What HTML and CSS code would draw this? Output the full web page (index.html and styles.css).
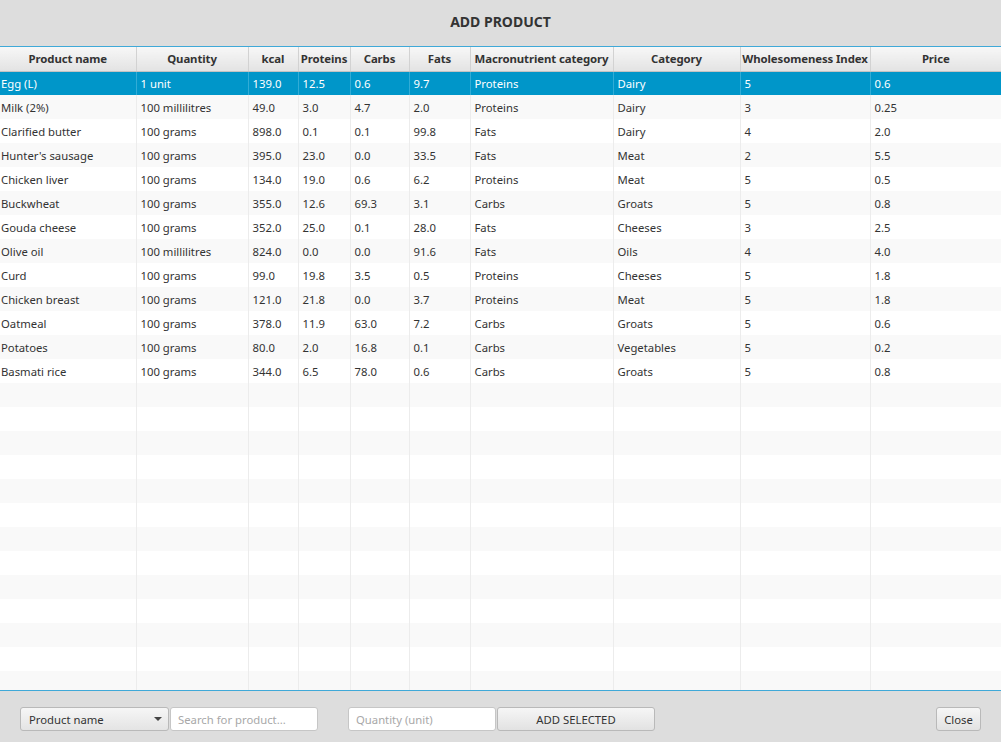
FILE: index.html
```html
<!DOCTYPE html>
<html>
<head>
<meta charset="utf-8">
<link rel="stylesheet" href="styles.css">
</head>
<body>
<div class="window">
  <div class="title">ADD PRODUCT</div>
  <div class="table-wrap">
    <table class="grid">
      <colgroup>
        <col style="width:136px"><col style="width:112px"><col style="width:50px"><col style="width:52px"><col style="width:59px"><col style="width:61px"><col style="width:143px"><col style="width:127px"><col style="width:130px"><col style="width:131px">
      </colgroup>
      <thead>
        <tr><th>Product name</th><th>Quantity</th><th>kcal</th><th>Proteins</th><th>Carbs</th><th>Fats</th><th>Macronutrient category</th><th>Category</th><th>Wholesomeness Index</th><th>Price</th></tr>
      </thead>
      <tbody>
        <tr class="sel"><td>Egg (L)</td><td>1 unit</td><td>139.0</td><td>12.5</td><td>0.6</td><td>9.7</td><td>Proteins</td><td>Dairy</td><td>5</td><td>0.6</td></tr>
        <tr><td>Milk (2%)</td><td>100 millilitres</td><td>49.0</td><td>3.0</td><td>4.7</td><td>2.0</td><td>Proteins</td><td>Dairy</td><td>3</td><td>0.25</td></tr>
        <tr><td>Clarified butter</td><td>100 grams</td><td>898.0</td><td>0.1</td><td>0.1</td><td>99.8</td><td>Fats</td><td>Dairy</td><td>4</td><td>2.0</td></tr>
        <tr><td>Hunter's sausage</td><td>100 grams</td><td>395.0</td><td>23.0</td><td>0.0</td><td>33.5</td><td>Fats</td><td>Meat</td><td>2</td><td>5.5</td></tr>
        <tr><td>Chicken liver</td><td>100 grams</td><td>134.0</td><td>19.0</td><td>0.6</td><td>6.2</td><td>Proteins</td><td>Meat</td><td>5</td><td>0.5</td></tr>
        <tr><td>Buckwheat</td><td>100 grams</td><td>355.0</td><td>12.6</td><td>69.3</td><td>3.1</td><td>Carbs</td><td>Groats</td><td>5</td><td>0.8</td></tr>
        <tr><td>Gouda cheese</td><td>100 grams</td><td>352.0</td><td>25.0</td><td>0.1</td><td>28.0</td><td>Fats</td><td>Cheeses</td><td>3</td><td>2.5</td></tr>
        <tr><td>Olive oil</td><td>100 millilitres</td><td>824.0</td><td>0.0</td><td>0.0</td><td>91.6</td><td>Fats</td><td>Oils</td><td>4</td><td>4.0</td></tr>
        <tr><td>Curd</td><td>100 grams</td><td>99.0</td><td>19.8</td><td>3.5</td><td>0.5</td><td>Proteins</td><td>Cheeses</td><td>5</td><td>1.8</td></tr>
        <tr><td>Chicken breast</td><td>100 grams</td><td>121.0</td><td>21.8</td><td>0.0</td><td>3.7</td><td>Proteins</td><td>Meat</td><td>5</td><td>1.8</td></tr>
        <tr><td>Oatmeal</td><td>100 grams</td><td>378.0</td><td>11.9</td><td>63.0</td><td>7.2</td><td>Carbs</td><td>Groats</td><td>5</td><td>0.6</td></tr>
        <tr><td>Potatoes</td><td>100 grams</td><td>80.0</td><td>2.0</td><td>16.8</td><td>0.1</td><td>Carbs</td><td>Vegetables</td><td>5</td><td>0.2</td></tr>
        <tr><td>Basmati rice</td><td>100 grams</td><td>344.0</td><td>6.5</td><td>78.0</td><td>0.6</td><td>Carbs</td><td>Groats</td><td>5</td><td>0.8</td></tr>
        <tr><td></td><td></td><td></td><td></td><td></td><td></td><td></td><td></td><td></td><td></td></tr>
        <tr><td></td><td></td><td></td><td></td><td></td><td></td><td></td><td></td><td></td><td></td></tr>
        <tr><td></td><td></td><td></td><td></td><td></td><td></td><td></td><td></td><td></td><td></td></tr>
        <tr><td></td><td></td><td></td><td></td><td></td><td></td><td></td><td></td><td></td><td></td></tr>
        <tr><td></td><td></td><td></td><td></td><td></td><td></td><td></td><td></td><td></td><td></td></tr>
        <tr><td></td><td></td><td></td><td></td><td></td><td></td><td></td><td></td><td></td><td></td></tr>
        <tr><td></td><td></td><td></td><td></td><td></td><td></td><td></td><td></td><td></td><td></td></tr>
        <tr><td></td><td></td><td></td><td></td><td></td><td></td><td></td><td></td><td></td><td></td></tr>
        <tr><td></td><td></td><td></td><td></td><td></td><td></td><td></td><td></td><td></td><td></td></tr>
        <tr><td></td><td></td><td></td><td></td><td></td><td></td><td></td><td></td><td></td><td></td></tr>
        <tr><td></td><td></td><td></td><td></td><td></td><td></td><td></td><td></td><td></td><td></td></tr>
        <tr><td></td><td></td><td></td><td></td><td></td><td></td><td></td><td></td><td></td><td></td></tr>
        <tr><td></td><td></td><td></td><td></td><td></td><td></td><td></td><td></td><td></td><td></td></tr>
      </tbody>
    </table>
  </div>
  <div class="bottom">
    <div class="combo"><span>Product name</span><span class="arrow"></span></div>
    <div class="field search">Search for product...</div>
    <div class="field qty">Quantity (unit)</div>
    <div class="btn add">ADD SELECTED</div>
    <div class="spacer"></div>
    <div class="btn close">Close</div>
  </div>
</div>
</body>
</html>
```
FILE: styles.css
```css
html, body {
  margin: 0;
  padding: 0;
  background: #dddddd;
  font-family: "Noto Sans", "Open Sans", sans-serif;
  font-size: 11.3px;
  color: #333333;
}
.window {
  width: 1001px;
  height: 742px;
  display: flex;
  flex-direction: column;
  overflow: hidden;
}
.title {
  height: 46px;
  display: flex;
  align-items: center;
  justify-content: center;
  font-weight: bold;
  font-size: 14px;
  color: #333;
  padding-bottom: 4px;
  box-sizing: border-box;
}
.table-wrap {
  height: 645px;
  border-top: 1px solid #3fa9d8;
  border-bottom: 1px solid #3fa9d8;
  background: #ffffff;
  overflow: hidden;
  box-sizing: border-box;
}
.grid {
  table-layout: fixed;
  border-collapse: collapse;
  width: 1001px;
}
.grid th {
  height: 24px;
  padding: 0 1px;
  font-weight: bold;
  font-size: 11.4px;
  letter-spacing: -0.1px;
  color: #333;
  text-align: center;
  white-space: nowrap;
  overflow: hidden;
  background: linear-gradient(#f7f7f7, #e3e3e3);
  border-right: 1px solid #d2d2d2;
  border-bottom: 1px solid #c3c3c3;
  box-sizing: border-box;
}
.grid th:last-child { border-right: none; }
.grid td {
  height: 24px;
  padding: 0 4px;
  white-space: nowrap;
  overflow: hidden;
  color: #333;
  border-right: 1px solid #ececec;
  box-sizing: border-box;
  line-height: 23px;
}
.grid td:first-child { padding-left: 1px; }
.grid td:last-child { border-right: none; }
.grid tbody tr { background: #ffffff; }
.grid tbody tr:nth-child(even) { background: #f9f9f9; }
.grid tbody tr.sel { background: #0096c9; }
.grid tbody tr.sel td { color: #ffffff; border-right-color: #32acd6; }
.bottom {
  flex: 1;
  display: flex;
  align-items: center;
  padding: 5px 20px 0 20px;
  box-sizing: border-box;
}
.combo {
  width: 149px;
  height: 24px;
  box-sizing: border-box;
  border: 1px solid #b9b9b9;
  border-radius: 3px;
  background: linear-gradient(#f6f6f6, #e4e4e4);
  display: flex;
  align-items: center;
  justify-content: space-between;
  padding: 0 6px 0 8px;
  color: #333;
}
.arrow {
  width: 0;
  height: 0;
  border-left: 4px solid transparent;
  border-right: 4px solid transparent;
  border-top: 4px solid #444;
}
.field {
  height: 24px;
  box-sizing: border-box;
  border: 1px solid #c6c6c6;
  border-radius: 3px;
  background: #ffffff;
  color: #a8a8a8;
  display: flex;
  align-items: center;
  padding: 0 7px;
}
.search { width: 148px; margin-left: 1px; }
.qty { width: 148px; margin-left: 30px; }
.btn {
  height: 24px;
  box-sizing: border-box;
  border: 1px solid #b9b9b9;
  border-radius: 3px;
  background: linear-gradient(#f6f6f6, #e2e2e2);
  display: flex;
  align-items: center;
  justify-content: center;
  color: #333;
}
.add { width: 158px; margin-left: 1px; }
.spacer { flex: 1; }
.close { width: 45px; }
```
